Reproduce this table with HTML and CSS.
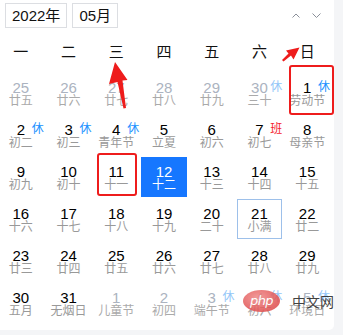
FILE: index.html
```html
<!DOCTYPE html>
<html lang="zh">
<head>
<meta charset="utf-8">
<link rel="stylesheet" href="styles.css">
</head>
<body>
<div class="card">
  <div class="toolbar">
    <div class="select">2022年</div>
    <div class="select">05月</div>
    <div class="nav">
      <svg class="chev" width="8" height="5" viewBox="0 0 8 5"><polyline points="0.5,4.5 4,1 7.5,4.5" fill="none" stroke="#8a8f99" stroke-width="1"/></svg>
      <svg class="chev" width="9" height="5" viewBox="0 0 9 5"><polyline points="0.5,0.5 4.5,4.5 8.5,0.5" fill="none" stroke="#8a8f99" stroke-width="1"/></svg>
    </div>
  </div>
  <div class="weekdays">
    <span>一</span><span>二</span><span>三</span><span>四</span><span>五</span><span>六</span><span>日</span>
  </div>
  <div class="grid">
    <div class="cell other"><div class="num">25</div><div class="lunar">廿五</div></div>
    <div class="cell other"><div class="num">26</div><div class="lunar">廿六</div></div>
    <div class="cell other"><div class="num">27</div><div class="lunar">廿七</div></div>
    <div class="cell other"><div class="num">28</div><div class="lunar">廿八</div></div>
    <div class="cell other"><div class="num">29</div><div class="lunar">廿九</div></div>
    <div class="cell other"><div class="num">30</div><div class="lunar">三十</div><span class="tag rest">休</span></div>
    <div class="cell"><div class="num">1</div><div class="lunar">劳动节</div><span class="tag rest">休</span></div>

    <div class="cell"><div class="num">2</div><div class="lunar">初二</div><span class="tag rest">休</span></div>
    <div class="cell"><div class="num">3</div><div class="lunar">初三</div><span class="tag rest">休</span></div>
    <div class="cell"><div class="num">4</div><div class="lunar">青年节</div><span class="tag rest">休</span></div>
    <div class="cell"><div class="num">5</div><div class="lunar">立夏</div></div>
    <div class="cell"><div class="num">6</div><div class="lunar">初六</div></div>
    <div class="cell"><div class="num">7</div><div class="lunar">初七</div><span class="tag work">班</span></div>
    <div class="cell"><div class="num">8</div><div class="lunar">母亲节</div></div>

    <div class="cell"><div class="num">9</div><div class="lunar">初九</div></div>
    <div class="cell"><div class="num">10</div><div class="lunar">初十</div></div>
    <div class="cell"><div class="num">11</div><div class="lunar">十一</div></div>
    <div class="cell today"><div class="num">12</div><div class="lunar">十二</div></div>
    <div class="cell"><div class="num">13</div><div class="lunar">十三</div></div>
    <div class="cell"><div class="num">14</div><div class="lunar">十四</div></div>
    <div class="cell"><div class="num">15</div><div class="lunar">十五</div></div>

    <div class="cell"><div class="num">16</div><div class="lunar">十六</div></div>
    <div class="cell"><div class="num">17</div><div class="lunar">十七</div></div>
    <div class="cell"><div class="num">18</div><div class="lunar">十八</div></div>
    <div class="cell"><div class="num">19</div><div class="lunar">十九</div></div>
    <div class="cell"><div class="num">20</div><div class="lunar">二十</div></div>
    <div class="cell selected"><div class="num">21</div><div class="lunar">小满</div></div>
    <div class="cell"><div class="num">22</div><div class="lunar">廿二</div></div>

    <div class="cell"><div class="num">23</div><div class="lunar">廿三</div></div>
    <div class="cell"><div class="num">24</div><div class="lunar">廿四</div></div>
    <div class="cell"><div class="num">25</div><div class="lunar">廿五</div></div>
    <div class="cell"><div class="num">26</div><div class="lunar">廿六</div></div>
    <div class="cell"><div class="num">27</div><div class="lunar">廿七</div></div>
    <div class="cell"><div class="num">28</div><div class="lunar">廿八</div></div>
    <div class="cell"><div class="num">29</div><div class="lunar">廿九</div></div>

    <div class="cell"><div class="num">30</div><div class="lunar">五月</div></div>
    <div class="cell"><div class="num">31</div><div class="lunar">无烟日</div></div>
    <div class="cell other"><div class="num">1</div><div class="lunar">儿童节</div></div>
    <div class="cell other"><div class="num">2</div><div class="lunar">初四</div></div>
    <div class="cell other"><div class="num">3</div><div class="lunar">端午节</div><span class="tag rest">休</span></div>
    <div class="cell other"><div class="num">4</div><div class="lunar">初六</div><span class="tag rest">休</span></div>
    <div class="cell other"><div class="num">5</div><div class="lunar">环境日</div><span class="tag rest">休</span></div>
  </div>

  <div class="mark mark-may1"></div>
  <div class="mark mark-11"></div>
  <svg class="arrows" width="334" height="330" viewBox="0 0 334 330">
    <polygon points="115,62 127.5,80 122.5,80.5 126,108 123.5,108.5 117.5,82 109,84" fill="#ee1c1c"/>
    <polygon points="299.5,47.5 293.5,59.5 291,55.5 283.5,61.5 282,60 288.5,53.5 286,50.5" fill="#ee1c1c"/>
  </svg>
  <div class="watermark">
    <span class="php">php</span>
    <span class="cn">中文网</span>
  </div>
</div>
</body>
</html>
```

FILE: styles.css
```css
html, body {
  margin: 0;
  padding: 0;
}
body {
  background: #f4f5f7;
  font-family: "Liberation Sans", "Noto Sans CJK SC", sans-serif;
  color: #000;
}
.card {
  position: relative;
  width: 334px;
  height: 330px;
  background: #fff;
  border-bottom-right-radius: 5px;
  overflow: hidden;
}
.toolbar {
  display: flex;
  align-items: center;
  gap: 5px;
  padding: 3px 0 0 5px;
  height: 25px;
}
.select {
  box-sizing: border-box;
  height: 25px;
  border: 1px solid #dcdee2;
  padding: 0 6px;
  font-size: 15px;
  line-height: 23px;
  color: #111;
}
.nav {
  margin-left: auto;
  margin-right: 13px;
  display: flex;
  align-items: center;
  gap: 12px;
}
.chev {
  display: block;
}
.weekdays {
  display: grid;
  grid-template-columns: repeat(7, 1fr);
  width: 334px;
  margin: 14px 0 0 -3px;
  font-size: 15px;
  line-height: 20px;
  text-align: center;
  color: #111;
}
.grid {
  display: grid;
  grid-template-columns: repeat(7, 1fr);
  grid-auto-rows: 40px;
  row-gap: 2px;
  width: 334px;
  margin: 11px 0 0 -3px;
}
.cell {
  position: relative;
  box-sizing: border-box;
  margin: 0 1px;
  padding-top: 7px;
  text-align: center;
}
.num {
  font-size: 15px;
  line-height: 15px;
  color: #000;
}
.lunar {
  font-size: 12px;
  line-height: 12px;
  color: #999;
  white-space: nowrap;
}
.tag {
  position: absolute;
  right: 0;
  top: 8px;
  font-size: 12px;
  line-height: 13px;
}
.rest {
  color: #1890ff;
}
.work {
  color: #f5222d;
}
.other .num {
  color: #abb3c0;
}
.other .lunar {
  color: #aaa;
}
.other .rest {
  color: #93c6f8;
}
.today {
  background: #1677ff;
}
.today .num,
.today .lunar {
  color: #fff;
}
.selected {
  border: 1px solid #9dc0ea;
  padding-top: 6px;
}
.mark {
  position: absolute;
  box-sizing: border-box;
  border: 2.5px solid #ee1c1c;
  border-radius: 3px;
}
.mark-may1 {
  left: 289px;
  top: 65px;
  width: 45px;
  height: 50px;
}
.mark-11 {
  left: 97px;
  top: 153px;
  width: 40px;
  height: 43px;
}
.arrows {
  position: absolute;
  left: 0;
  top: 0;
}
.watermark {
  position: absolute;
  left: 243px;
  top: 290px;
  display: flex;
  align-items: center;
  gap: 12px;
  white-space: nowrap;
  opacity: 0.85;
}
.php {
  display: block;
  width: 37px;
  height: 22px;
  border-radius: 50%;
  background: radial-gradient(ellipse at 40% 35%, #f08a8a 0%, #e25555 60%, #d83c3c 100%);
  color: #fff;
  font-family: "DejaVu Sans", sans-serif;
  font-style: italic;
  font-size: 13px;
  line-height: 21px;
  text-align: center;
  letter-spacing: -0.5px;
}
.cn {
  font-family: "Noto Sans CJK SC", sans-serif;
  font-size: 14px;
  line-height: 18px;
  color: #222;
}
```
